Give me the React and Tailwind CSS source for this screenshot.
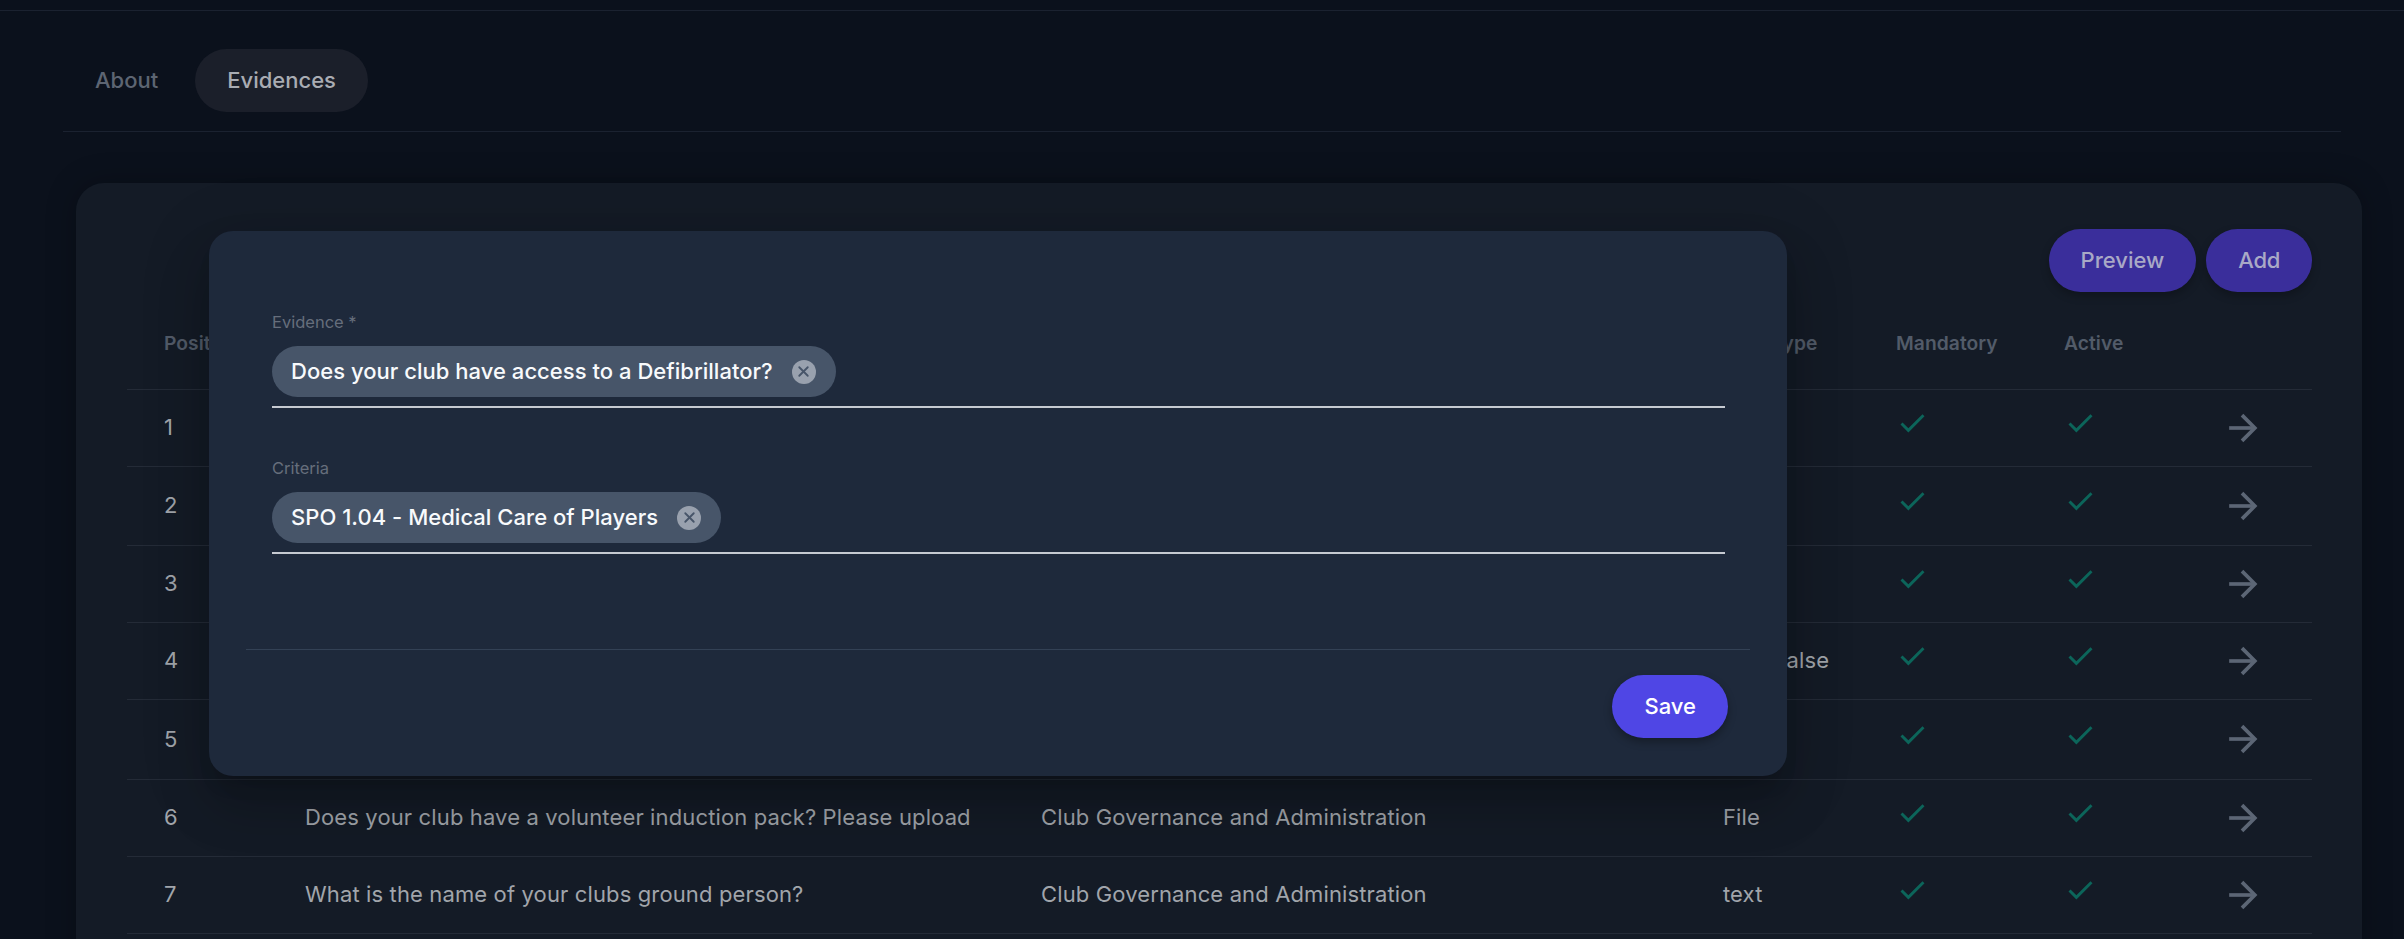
import React from "react";
import { ArrowRight, Check, X } from "lucide-react";

const rows = [
  { n: 1, type: "text", h: "h-[77px]" },
  { n: 2, type: "text", h: "h-[79px]" },
  { n: 3, type: "text", h: "h-[77px]" },
  { n: 4, type: "True/false", h: "h-[77px]" },
  { n: 5, type: "text", h: "h-[80px]" },
  { n: 6, evidence: "Does your club have a volunteer induction pack? Please upload", criteria: "Club Governance and Administration", type: "File", h: "h-[77px]" },
  { n: 7, evidence: "What is the name of your clubs ground person?", criteria: "Club Governance and Administration", type: "text", h: "h-[77px]" },
];

function Chip({ label }) {
  return (
    <div className="flex h-[51px] w-fit items-center gap-[19px] rounded-full bg-[#475569] pl-[19px] pr-[20px] text-[22px] font-[480] tracking-[0.03px] text-[#f8fafc]">
      <span>{label}</span>
      <span className="flex h-[24px] w-[24px] items-center justify-center rounded-full bg-[#99a1ae]">
        <X size={17} strokeWidth={2.6} className="text-[#475569]" />
      </span>
    </div>
  );
}

function Field({ label, value }) {
  return (
    <div>
      <div className="h-[24px] text-[16.5px] leading-[24px] text-[#666e7c]">{label}</div>
      <div className="mt-[12px] border-b-2 border-[#c6cad1] pb-[9px]">
        <Chip label={value} />
      </div>
    </div>
  );
}

function Cell({ children }) {
  return <td className="px-[37px] align-middle text-[22px] tracking-[0.13px] text-[#a1a5ab] whitespace-nowrap overflow-visible border-b border-[#242b37]">{children}</td>;
}

export default function App() {
  return (
    <div className="relative h-[939px] overflow-hidden bg-[#0b111c] font-['Inter',sans-serif]">
      <div className="h-[11px] border-b border-[#1b2230]" />
      <div className="mx-[63px] flex items-center gap-[5px] border-b border-[#1b2230] pt-[38px] pb-[19px]">
        <div className="flex h-[63px] items-center rounded-full px-[32px] text-[22px] font-[450] text-[#5d6572]">About</div>
        <div className="flex h-[63px] items-center rounded-full bg-[#1b1f2a] px-[32px] text-[22px] font-[450] text-[#a9acb3]">Evidences</div>
      </div>

      <div className="mt-[51px] ml-[76px] mr-[42px] h-[800px] rounded-[28px] bg-[#141b26] pt-[46px] pr-[50px] pl-[51px] shadow-[0_0_30px_rgba(0,0,0,0.25)]">
        <div className="flex justify-end gap-[10px]">
          <div className="flex h-[63px] items-center rounded-full bg-[#3a2e9b] px-[32px] text-[22px] font-[450] text-[#a9a9c6] shadow-[0_4px_8px_rgba(0,0,0,0.25)]">Preview</div>
          <div className="flex h-[63px] items-center rounded-full bg-[#3a2e9b] px-[32px] text-[22px] font-[450] tracking-[-0.3px] text-[#a9a9c6] shadow-[0_4px_8px_rgba(0,0,0,0.25)]">Add</div>
        </div>
        <table className="w-[2185px] table-fixed">
          <colgroup>
            <col className="w-[141px]" />
            <col className="w-[736px]" />
            <col className="w-[682px]" />
            <col className="w-[173px]" />
            <col className="w-[168px]" />
            <col className="w-[168px]" />
            <col className="w-[117px]" />
          </colgroup>
          <thead>
            <tr className="h-[97px]">
              {["Position", "Evidence", "Criteria", "Data Type", "Mandatory", "Active", ""].map((t, i) => (
                <th key={i} className="border-b border-[#242b37] px-[37px] pt-[7px] text-left align-middle text-[19.25px] font-semibold tracking-[0.05px] whitespace-nowrap text-[#525b69]">{t}</th>
              ))}
            </tr>
          </thead>
          <tbody>
            {rows.map((r) => (
              <tr key={r.n} className={r.h}>
                <Cell>{r.n}</Cell>
                <Cell>{r.evidence}</Cell>
                <Cell>{r.criteria}</Cell>
                <Cell>{r.type}</Cell>
                <Cell><Check size={33} strokeWidth={2.1} strokeLinecap="butt" strokeLinejoin="miter" className="mb-[8px] text-[#0c655a]" /></Cell>
                <Cell><Check size={33} strokeWidth={2.1} strokeLinecap="butt" strokeLinejoin="miter" className="mb-[8px] text-[#0c655a]" /></Cell>
                <td className="border-b border-[#242b37] pl-[25px] align-middle">
                  <ArrowRight size={44} strokeWidth={2} strokeLinecap="butt" strokeLinejoin="miter" className="text-[#5c6675]" />
                </td>
              </tr>
            ))}
          </tbody>
        </table>
      </div>

      <div className="absolute top-[231px] left-[209px] h-[545px] w-[1578px] rounded-[24px] bg-[#1e293b] pt-[79px] shadow-[0_15px_20px_-10px_rgba(0,0,0,0.2),0_33px_52px_4px_rgba(0,0,0,0.14),0_12px_63px_11px_rgba(0,0,0,0.12)]">
        <div className="flex flex-col gap-[48px] px-[63px] pr-[62px]">
          <Field label="Evidence *" value="Does your club have access to a Defibrillator?" />
          <Field label="Criteria" value="SPO 1.04 - Medical Care of Players" />
        </div>
        <div className="mx-[37px] mt-[95px] flex justify-end border-t border-[#334155] pt-[25px] pr-[22px]">
          <div className="flex h-[63px] items-center rounded-full bg-[#4f46e5] px-[32px] text-[22px] font-medium text-white shadow-[0_4px_8px_rgba(0,0,0,0.3)]">Save</div>
        </div>
      </div>
    </div>
  );
}
